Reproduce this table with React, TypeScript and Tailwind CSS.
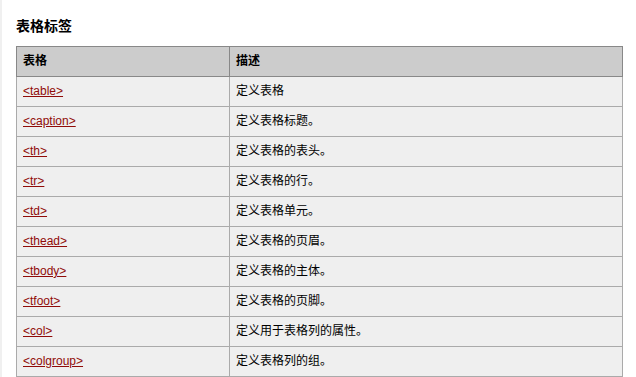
const rows: [string, string][] = [
  ["<table>", "定义表格"],
  ["<caption>", "定义表格标题。"],
  ["<th>", "定义表格的表头。"],
  ["<tr>", "定义表格的行。"],
  ["<td>", "定义表格单元。"],
  ["<thead>", "定义表格的页眉。"],
  ["<tbody>", "定义表格的主体。"],
  ["<tfoot>", "定义表格的页脚。"],
  ["<col>", "定义用于表格列的属性。"],
  ["<colgroup>", "定义表格列的组。"],
];

export default function App() {
  return (
    <div
      className="flex min-h-[377px] w-[636px] bg-white text-black"
      style={{ fontFamily: '"Liberation Sans", Arial, "Noto Sans CJK SC", sans-serif' }}
    >
      <div className="w-[2px] shrink-0 bg-[#f0f0f0]" />
      <div className="pl-[14px] pt-[16px]">
        <h3 className="mb-[10px] text-[14px] font-bold leading-[20px]">表格标签</h3>
        <table className="w-[607px] border-collapse border border-[#888888] text-[12px]">
          <thead>
            <tr>
              <th className="w-[213px] border border-[#888888] bg-[#cccccc] py-[5px] pl-[6px] pr-[15px] text-left font-bold leading-[19px]">
                表格
              </th>
              <th className="border border-[#888888] bg-[#cccccc] py-[5px] pl-[6px] pr-[15px] text-left font-bold leading-[19px]">
                描述
              </th>
            </tr>
          </thead>
          <tbody>
            {rows.map(([tag, desc]) => (
              <tr key={tag}>
                <td className="border border-[#aaaaaa] bg-[#efefef] py-[5px] pl-[6px] pr-[15px] leading-[19px]">
                  <a href="#" className="text-[#900b09] underline">
                    {tag}
                  </a>
                </td>
                <td className="border border-[#aaaaaa] bg-[#efefef] py-[5px] pl-[6px] pr-[15px] leading-[19px]">
                  {desc}
                </td>
              </tr>
            ))}
          </tbody>
        </table>
      </div>
    </div>
  );
}
